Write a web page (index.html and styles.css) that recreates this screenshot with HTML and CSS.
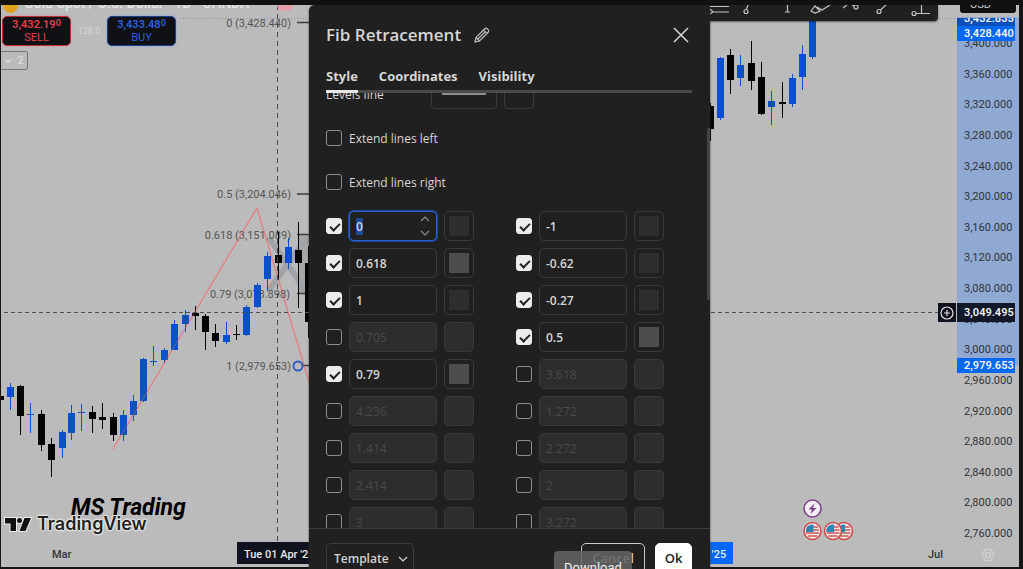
FILE: index.html
```html
<!DOCTYPE html>
<html lang="en">
<head>
    <meta charset="UTF-8">
    <meta name="viewport" content="width=device-width, initial-scale=1.0">
    <title>Gold Spot / U.S. Dollar - Fib Retracement</title>
    <link rel="stylesheet" href="styles.css">
</head>
<body>
    <div class="topbar"></div>

    <main class="app">
        <section class="chart">
            <svg class="plot" role="img" aria-label="Gold Spot daily candles">
                <g transform="translate(-1 -5)">
                    <!-- fib range and watermark -->
                    <rect x="298" y="234" width="60" height="59" fill="#a6a6a6"/>
                    <path d="M269 238L308 294M269 290L308 236" stroke="#a0a4a9" stroke-width="6" fill="none"/>
                    <path d="M180 18.5H1100" stroke="#8593a8" stroke-dasharray="1 2"/>
                    <path d="M113 449L257 208L312 392" stroke="#e09090" stroke-width="1.4" fill="none"/>
                    <path d="M297 22.500H330M297 194H330M297 234.500H330M297 293.500H330M297 365.500H330" stroke="#3c3c3c" stroke-width="1.500"/>
                    <g class="fib-labels">
                        <text x="291" y="27">0 (3,428.440)</text>
                        <text x="291" y="198">0.5 (3,204.046)</text>
                        <text x="291" y="239">0.618 (3,151.089)</text>
                        <text x="290" y="298">0.79 (3,073.898)</text>
                        <text x="291" y="370">1 (2,979.653)</text>
                    </g>
                    <g id="candles"></g>
                    <path d="M113 449L257 208L312 392" stroke="#e07070" stroke-opacity=".5" fill="none"/>
                    <path d="M277.500 5V542" stroke="#4a4a4a" stroke-dasharray="5 4"/>
                    <path d="M4 312.500H940" stroke="#505050" stroke-dasharray="4 3"/>
                    <circle cx="298" cy="366" r="4.500" fill="#bbb" stroke="#2f5fc4" stroke-width="2"/>
                    <!-- economic events -->
                    <circle cx="812.500" cy="508.500" r="8.500" fill="#f6eef7" stroke="#7c3d86" stroke-width="1.500"/>
                    <path d="M814.500 503.500L808.500 509.500H812L810.500 514L816.500 508H813Z" fill="#7c3d86"/>
                    <g id="flags"></g>
                </g>
            </svg>

            <div class="legend">
                <span class="coin"></span>
                <span class="symbol">Gold Spot / U.S. Dollar · 1D · OANDA</span>
                <span class="market-status"></span>
            </div>
            <div class="quotes">
                <button class="quote sell"><span>3,432.19<sup>0</sup></span><span>SELL</span></button>
                <span class="spread">128.0</span>
                <button class="quote buy"><span>3,433.48<sup>0</sup></span><span>BUY</span></button>
            </div>
            <button class="collapse" aria-label="Show 2 indicators">
                <svg width="8" height="6" viewBox="0 0 8 6"><path d="M1 1.500L4 4L7 1.500" fill="none" stroke="currentColor" stroke-width="1.500"/></svg>
                2
            </button>

            <div class="brand">
                <span class="channel">MS Trading</span>
                <div class="logo">
                    <svg width="28" height="15" viewBox="0 0 28 15">
                        <g fill="#111" stroke="#eee" stroke-width="2" paint-order="stroke">
                            <path d="M1 1H12V14H6.500V6.500H1Z"/>
                            <circle cx="15.500" cy="3.500" r="2.500"/>
                            <path d="M20.500 1H27L21.500 14H15.500Z"/>
                        </g>
                    </svg>
                    <span>TradingView</span>
                </div>
            </div>

            <div class="time-axis">
                <span class="month mar">Mar</span>
                <span class="month jul">Jul</span>
                <span class="time-tag crosshair-time">Tue 01 Apr '25</span>
                <span class="time-tag anchor-time">Tue 06 May '25</span>
            </div>

            <div class="toolbar">
                <svg width="240" height="16" viewBox="698 5 240 16" fill="none" stroke="#c4c4c4" stroke-width="1.200">
                    <path d="M710 6.500H729M713 12H729M710 9L713 12L710 14"/>
                    <circle cx="746" cy="11.500" r="2"/><path d="M746.500 9L748 5"/>
                    <path d="M787.500 5V12M785 12H790"/>
                    <path d="M811 11L815 6L820 11L815 13ZM817 7L822 10L830 5"/>
                    <path d="M843 8L848 4M852 5L854 6"/><circle cx="856" cy="7" r="2"/>
                    <circle cx="879" cy="11.500" r="2"/><path d="M880.500 10L887 4"/>
                    <circle cx="914" cy="13.500" r="2"/><path d="M916 13.500H930M921.500 5V13"/>
                </svg>
            </div>
        </section>

        <aside class="price-axis">
            <div class="selected-range"></div>
            <ul class="prices">
                <li>3,400.000</li>
                <li>3,360.000</li>
                <li>3,320.000</li>
                <li>3,280.000</li>
                <li>3,240.000</li>
                <li>3,200.000</li>
                <li>3,160.000</li>
                <li>3,120.000</li>
                <li>3,080.000</li>
                <li>3,040.000</li>
                <li>3,000.000</li>
                <li>2,960.000</li>
                <li>2,920.000</li>
                <li>2,880.000</li>
                <li>2,840.000</li>
                <li>2,800.000</li>
                <li>2,760.000</li>
            </ul>
            <button class="currency">USD</button>
            <span class="price-tag last"><span>3,432.835</span></span>
            <span class="price-tag high">3,428.440</span>
            <span class="price-tag low">2,979.653</span>
            <span class="price-tag cursor">3,049.495</span>
            <button class="add-alert" aria-label="Add alert">
                <svg width="14" height="14" viewBox="0 0 14 14" fill="none" stroke="#ddd" stroke-width="1.200"><circle cx="7" cy="7" r="6"/><path d="M7 4V10M4 7H10"/></svg>
            </button>
            <svg class="axis-settings" width="14" height="14" viewBox="0 0 14 14" fill="none" stroke="#cfcfcf" stroke-width="1.500"><path d="M4 1.500H10L13 7L10 12.500H4L1 7Z"/><circle cx="7" cy="7" r="2.500"/></svg>
        </aside>
    </main>

    <div class="dialog-layer">
        <form class="dialog" role="dialog" aria-labelledby="dialogTitle">
            <header class="dialog-header">
                <h1 id="dialogTitle">Fib Retracement</h1>
                <button type="button" class="icon-button" aria-label="Rename">
                    <svg width="16" height="16" viewBox="0 0 16 16" fill="none" stroke="currentColor" stroke-width="1.200"><path d="M1 15L2 10.500L10.500 2Q12 .5 13.500 2Q15.500 3.500 14 5.500L5.500 14ZM2 10.500L5.500 14M9.500 3L13 6.500M4 12L11 5"/></svg>
                </button>
                <button type="button" class="icon-button close" aria-label="Close">
                    <svg width="16" height="16" viewBox="0 0 16 16" fill="none" stroke="currentColor" stroke-width="1.500"><path d="M1 1L15 15M15 1L1 15"/></svg>
                </button>
            </header>
            <nav class="tabs">
                <button type="button" class="tab active">Style</button>
                <button type="button" class="tab">Coordinates</button>
                <button type="button" class="tab">Visibility</button>
            </nav>
            <div class="dialog-body">
                <div class="dialog-content">
                    <div class="option">
                        <span class="option-name">Levels line</span>
                        <button type="button" class="line-style" aria-label="Line width"></button>
                        <button type="button" class="line-style small" aria-label="Line style"></button>
                    </div>
                    <div class="option">
                        <input type="checkbox" id="extendLeft">
                        <label for="extendLeft">Extend lines left</label>
                    </div>
                    <div class="option">
                        <input type="checkbox" id="extendRight">
                        <label for="extendRight">Extend lines right</label>
                    </div>
                    <div class="levels" id="levels"></div>
                </div>
                <div class="scrollbar"></div>
            </div>
            <footer class="dialog-footer">
                <div class="template">
                    <select aria-label="Template"><option>Template</option></select>
                    <svg width="10" height="6" viewBox="0 0 10 6" fill="none" stroke="currentColor" stroke-width="1.200"><path d="M1 1L5 5L9 1"/></svg>
                </div>
                <button type="button" class="button cancel">Cancel</button>
                <button type="submit" class="button ok">Ok</button>
            </footer>
        </form>
    </div>

    <div class="watermark">www.BANDICAM.com</div>
    <div class="tooltip">Download</div>

    <script>
        // x, body top, body bottom, wick top, wick bottom, direction
        const candles = [
            [0, 396, 400, 396, 400, 'down'], [10, 387, 397, 383, 410, 'up'],
            [20, 386, 416, 385, 435, 'down'], [30, 414, 415, 403, 433, 'up'],
            [41, 414, 445, 410, 451, 'down'], [51, 444, 460, 438, 477, 'down'],
            [62, 432, 448, 430, 458, 'up'], [71, 413, 433, 405, 440, 'up'],
            [81, 412, 413, 404, 431, 'up'], [92, 412, 419, 406, 433, 'down'],
            [102, 417, 420, 403, 429, 'down'], [113, 417, 435, 413, 441, 'down'],
            [123, 415, 435, 410, 441, 'up'], [133, 401, 415, 395, 421, 'up'],
            [143, 359, 401, 358, 402, 'up'], [153, 361, 362, 346, 366, 'up'],
            [164, 350, 360, 348, 363, 'up'], [174, 324, 350, 320, 350, 'up'],
            [185, 315, 324, 310, 332, 'up'], [195, 313, 316, 306, 330, 'down'],
            [205, 316, 332, 314, 350, 'down'], [215, 333, 341, 324, 347, 'down'],
            [226, 335, 342, 322, 344, 'up'], [236, 334, 335, 325, 340, 'down'],
            [246, 307, 335, 305, 336, 'up'], [257, 285, 307, 283, 308, 'up'],
            [267, 256, 279, 252, 291, 'up'], [278, 255, 263, 232, 280, 'down'],
            [288, 247, 263, 238, 269, 'up'], [298, 250, 263, 222, 308, 'down'],
            [308, 263, 322, 246, 338, 'down'], [710, 106, 129, 103, 141, 'down'],
            [720, 58, 118, 57, 120, 'up'], [730, 55, 80, 49, 94, 'down'],
            [740, 65, 78, 55, 86, 'up'], [751, 63, 81, 41, 90, 'down'],
            [761, 77, 114, 62, 115, 'down'], [771, 101, 107, 91, 125, 'up'],
            [782, 102, 104, 82, 118, 'down'], [792, 78, 104, 74, 107, 'up'],
            [802, 54, 77, 45, 90, 'up'], [812, 0, 57, 0, 59, 'up']
        ];
        document.getElementById('candles').innerHTML = candles.map(function([x, top, bottom, high, low, dir]) {
            return `<g class="${dir}"><rect x="${x}" y="${high}" width="1" height="${low - high}"/>` +
                `<rect x="${x - 3}" y="${top}" width="7" height="${bottom - top}"/></g>`;
        }).join('');

        // US events, the last one is drawn on top
        document.getElementById('flags').innerHTML = [844, 833, 812.5].map(function(x) {
            return `<g transform="translate(${x} 531)">
                <circle r="8.5" fill="#f3e6e6" stroke="#cf4a4a" stroke-width="1.5"/>
                <path d="M-5 -4H5.500M-6.500 -1H6.500M-6.500 2H6.500M-4.500 5H4.500" stroke="#d25555" stroke-width="1.500"/>
                <path d="M-6.500 1A6.500 6.500 0 0 1 1 -6.500V1Z" fill="#2b86b8"/>
            </g>`;
        }).join('');

        // value, enabled, swatch shade
        const levels = [
            ['0', true, 'dark'], ['-1', true, 'dark'],
            ['0.618', true, 'light'], ['-0.62', true, 'dark'],
            ['1', true, 'dark'], ['-0.27', true, 'dark'],
            ['0.705', false, ''], ['0.5', true, 'light'],
            ['0.79', true, 'light'], ['3.618', false, ''],
            ['4.236', false, ''], ['1.272', false, ''],
            ['1.414', false, ''], ['2.272', false, ''],
            ['2.414', false, ''], ['2', false, ''],
            ['3', false, ''], ['3.272', false, '']
        ];
        document.getElementById('levels').innerHTML = levels.map(function([value, on, shade], i) {
            const spinner = i === 0 ? '<svg class="spinner" width="10" height="20" viewBox="0 0 10 20"><path d="M1 5L5 1L9 5M1 15L5 19L9 15" fill="none" stroke="#8a8a8a" stroke-width="1.2"/></svg>' : '';
            return `<div class="level">
                <input type="checkbox" aria-label="Show level ${value}" ${on ? 'checked' : ''}>
                <div class="level-value">
                    <input type="text" id="level${i}" aria-label="Level" value="${value}" ${on ? '' : 'disabled'}>${spinner}
                </div>
                <button type="button" class="swatch ${shade}" aria-label="Level color" ${on ? '' : 'disabled'}></button>
            </div>`;
        }).join('');

        document.getElementById('level0').focus();
        document.getElementById('level0').select();
    </script>
</body>
</html>
```
FILE: styles.css
```css
* {
    box-sizing: border-box;
}
body {
    display: flex;
    flex-direction: column;
    position: relative;
    height: 100vh;
    margin: 0;
    overflow: hidden;
    background-color: #161616;
    font-family: "Open Sans", sans-serif;
}
button, input, select {
    margin: 0;
    padding: 0;
    font-family: inherit;
}
button {
    cursor: pointer;
}
.topbar {
    position: relative;
    z-index: 5;
    height: 5px;
    background-color: #111;
}
.app {
    flex: 1;
    display: flex;
    min-height: 0;
    margin: 0 4px 2px 1px;
    background-color: #bbb;
    font-family: Roboto, sans-serif;
    font-size: 11px;
}

/* Chart */
.chart {
    flex: 1;
    display: flex;
    flex-direction: column;
    position: relative;
    min-width: 0;
    overflow: hidden;
}
.plot {
    position: absolute;
    inset: 0;
    width: 100%;
    height: 100%;
}
.up {
    fill: #0a50c8;
}
.down {
    fill: #050505;
}
.fib-labels {
    fill: #555;
    text-anchor: end;
}
.legend {
    display: flex;
    align-items: center;
    gap: 6px;
    position: relative;
    width: 290px;
    height: 18px;
    margin: -11px 0 0 2px;
    color: #e4e4e4;
    font-size: 14px;
    font-weight: 500;
    white-space: nowrap;
}
.coin {
    width: 15px;
    height: 15px;
    margin-top: 4px;
    border-radius: 50%;
    background-color: #e0a21c;
}
.market-status {
    width: 16px;
    height: 12px;
    margin: 4px 0 0 auto;
    border-radius: 6px;
    background-color: #e3a0a8;
}
.quotes {
    display: flex;
    align-items: center;
    position: relative;
    margin: 4px 0 0 1px;
}
.quote {
    display: flex;
    flex-direction: column;
    align-items: center;
    justify-content: center;
    width: 69px;
    height: 30px;
    border: 1px solid;
    border-radius: 5px;
    background-color: #101114;
    font-size: 11px;
    line-height: 13px;
}
.quote span:first-child {
    font-weight: 600;
}
.quote sup {
    font-size: 9px;
    line-height: 0;
    vertical-align: 2px;
}
.sell {
    border-color: #b8323c;
    color: #e0404c;
    box-shadow: 0 0 2px #f08088;
}
.buy {
    border-color: #1c3f8c;
    color: #2c5fd8;
    box-shadow: 0 0 2px #6f9cf0;
}
.spread {
    width: 36px;
    color: #d6d6d6;
    font-size: 9px;
    text-align: center;
}
.collapse {
    display: flex;
    align-items: center;
    justify-content: center;
    gap: 5px;
    position: relative;
    width: 27px;
    height: 19px;
    margin-top: 5px;
    border: 1px solid #777;
    border-left: none;
    border-radius: 0 3px 3px 0;
    background-color: transparent;
    color: #e0e0e0;
    font-size: 11px;
}
.brand {
    position: relative;
    margin-top: auto;
    padding-left: 3px;
}
.channel {
    display: block;
    position: relative;
    z-index: 1;
    margin-left: 67px;
    color: #000;
    font-size: 23px;
    font-style: italic;
    font-weight: 700;
    line-height: 24px;
}
.logo {
    display: flex;
    align-items: center;
    gap: 5px;
    margin-top: -6px;
    color: #222;
    font-family: Inter, sans-serif;
    font-size: 18px;
    font-weight: 600;
    line-height: 20px;
    text-shadow: 0 0 2px #fff, 0 0 2px #fff, 0 0 3px #fff;
}
.logo svg {
    overflow: visible;
}
.time-axis {
    position: relative;
    height: 25px;
    margin-top: 8px;
    line-height: 25px;
}
.month, .time-tag {
    position: absolute;
    top: 0;
    height: 22px;
}
.month {
    color: #333;
    font-weight: 500;
}
.mar {
    left: 51px;
}
.jul {
    left: 927px;
}
.time-tag {
    padding: 0 7px;
    color: #e8e8e8;
    font-weight: 500;
}
.crosshair-time {
    left: 236px;
    background-color: #10131d;
}
.anchor-time {
    left: 644px;
    background-color: #0568f5;
}
.toolbar {
    position: absolute;
    top: 0;
    left: 697px;
    height: 16px;
    border-radius: 0 0 4px 0;
    background-color: #202020;
    box-shadow: 0 1px 2px rgba(0, 0, 0, 0.5);
}
.toolbar svg {
    display: block;
}

/* Price axis */
.price-axis {
    display: flex;
    position: relative;
    width: 62px;
    padding: 32px 0 26px 7px;
}
.selected-range {
    position: absolute;
    top: 12px;
    left: 0;
    width: 100%;
    height: 348px;
    background-color: #8fa9d2;
}
.prices {
    display: flex;
    flex-direction: column;
    justify-content: space-between;
    position: relative;
    margin: 0;
    padding: 0;
    color: #303338;
    line-height: 14px;
    list-style: none;
}
.currency {
    position: absolute;
    top: -10px;
    left: 3px;
    width: 56px;
    height: 18px;
    padding-left: 10px;
    border: none;
    border-radius: 3px;
    background-color: #111;
    color: #ccc;
    font-size: 11px;
    text-align: left;
}
.price-tag {
    position: absolute;
    left: 0;
    width: 58px;
    height: 15px;
    padding-left: 7px;
    background-color: #0568f5;
    color: #f2f2f2;
    font-weight: 600;
    line-height: 15px;
}
.last {
    top: 13px;
    height: 9px;
    overflow: hidden;
    background-color: #0b50b8;
}
.last span {
    display: block;
    margin-top: -7px;
}
.high {
    top: 21px;
}
.low {
    top: 353px;
}
.cursor {
    top: 298px;
    height: 19px;
    background-color: #10182a;
    line-height: 19px;
}
.add-alert {
    display: flex;
    align-items: center;
    justify-content: center;
    position: absolute;
    top: 298px;
    left: -19px;
    width: 18px;
    height: 19px;
    border: none;
    background-color: #10131d;
}
.axis-settings {
    position: absolute;
    right: 24px;
    bottom: 5px;
}

/* Dialog */
.dialog-layer {
    display: flex;
    justify-content: center;
    position: absolute;
    inset: 5px 4px -4px 0;
    pointer-events: none;
}
.dialog {
    display: flex;
    flex-direction: column;
    width: 401px;
    border-radius: 6px 6px 0 0;
    background-color: #202020;
    color: #d6d6d6;
    font-size: 12px;
    pointer-events: auto;
    box-shadow: 0 0 2px #333;
}
.dialog-header {
    display: flex;
    align-items: center;
    gap: 13px;
    padding: 18px 21px 0 17px;
}
.dialog-header h1 {
    margin: 0;
    font-size: 17px;
    font-weight: 600;
    line-height: 24px;
}
.icon-button {
    display: flex;
    border: none;
    background: none;
    color: #bdbdbd;
}
.close {
    margin-left: auto;
    color: #d6d6d6;
}
.tabs {
    display: flex;
    gap: 21px;
    margin: 17px 18px 0 17px;
    border-bottom: 3px solid #4a4a4a;
}
.tab {
    height: 29px;
    margin-bottom: -3px;
    padding-bottom: 3px;
    border: none;
    border-bottom: 3px solid transparent;
    background: none;
    color: #d6d6d6;
    font-size: 13px;
    font-weight: 700;
    line-height: 22px;
}
.active {
    border-bottom-color: #e6e6e6;
}
.dialog-body {
    flex: 1;
    position: relative;
    min-height: 0;
    overflow: hidden;
}
.dialog-content {
    margin-top: -21px;
    padding-left: 17px;
}
.option {
    display: flex;
    align-items: center;
    gap: 7px;
    height: 44px;
    font-weight: 500;
}
.option-name {
    width: 98px;
}
.line-style {
    width: 66px;
    height: 30px;
    border: 1px solid #3a3a3a;
    border-radius: 4px;
    background: none;
}
.line-style:not(.small)::before {
    content: "";
    display: block;
    height: 2px;
    margin: 0 10px;
    background-color: #8c8c8c;
}
.small {
    width: 30px;
}
input[type="checkbox"] {
    appearance: none;
    flex: none;
    position: relative;
    width: 16px;
    height: 16px;
    border: 1px solid #8e8e8e;
    border-radius: 3px;
}
input[type="checkbox"]:checked {
    border-color: #ececec;
    background-color: #ececec;
}
input[type="checkbox"]:checked::before {
    content: "";
    position: absolute;
    top: 4px;
    left: 3px;
    width: 8px;
    height: 4px;
    border: solid #222;
    border-width: 0 0 2px 2px;
    transform: rotate(-45deg);
}
.levels {
    display: grid;
    grid-template-columns: repeat(2, max-content);
    gap: 7px 42px;
    padding-top: 7px;
}
.level {
    display: flex;
    align-items: center;
    gap: 7px;
}
.level-value {
    position: relative;
}
.level-value input {
    display: block;
    width: 88px;
    height: 30px;
    padding: 0 6px;
    border: 1px solid #3a3a3a;
    border-radius: 5px;
    outline: none;
    background-color: #202020;
    color: #d6d6d6;
    font-size: 12px;
    font-weight: 600;
}
.level-value input:focus {
    border-color: #2a62c8;
    box-shadow: 0 0 0 1px #1a4aa0;
}
.level-value input::selection {
    background-color: #1c4a94;
    color: #d6d6d6;
}
.level-value input:disabled {
    background-color: #2d2d2d;
    color: #4a4a4a;
    font-weight: 500;
}
.spinner {
    position: absolute;
    top: 5px;
    right: 7px;
}
.swatch {
    width: 30px;
    height: 30px;
    padding: 4px;
    border: 1px solid #3a3a3a;
    border-radius: 5px;
    background: #202020 content-box;
}
.swatch.dark {
    background-color: #2e2e2e;
}
.swatch.light {
    background-color: #4d4d4d;
}
.swatch:disabled {
    background: #2d2d2d;
}
.scrollbar {
    position: absolute;
    top: 35px;
    right: 0;
    width: 3px;
    height: 172px;
    border-radius: 2px;
    background-color: #444;
}
.dialog-footer {
    display: flex;
    gap: 10px;
    padding: 14px 18px 0 17px;
    border-top: 1px solid #3c3c3c;
}
.template {
    position: relative;
    margin-right: auto;
}
.template select {
    appearance: none;
    width: 88px;
    height: 30px;
    padding-left: 7px;
    border: 1px solid #3c3c3c;
    border-radius: 5px;
    background-color: #202020;
    color: #d0d0d0;
    font-size: 12px;
    font-weight: 600;
}
.template svg {
    position: absolute;
    top: 13px;
    right: 6px;
    pointer-events: none;
}
.button {
    height: 30px;
    border: 1px solid #c8c8c8;
    border-radius: 5px;
    font-size: 13px;
    font-weight: 600;
}
.cancel {
    width: 64px;
    background-color: #202020;
    color: #d6d6d6;
}
.ok {
    width: 37px;
    border-color: #fff;
    background-color: #fff;
    color: #222;
}

/* Overlays */
.watermark {
    position: absolute;
    top: -13px;
    left: 408px;
    color: #ddd;
    font-family: "Liberation Sans", sans-serif;
    font-size: 19px;
    font-weight: 700;
    line-height: 24px;
}
.tooltip {
    position: absolute;
    top: 551px;
    left: 554px;
    padding: 7px 10px;
    border-radius: 4px;
    background-color: rgba(98, 98, 98, 0.88);
    color: #f0f0f0;
    font-family: Roboto, sans-serif;
    font-size: 13px;
    line-height: 20px;
}
```
